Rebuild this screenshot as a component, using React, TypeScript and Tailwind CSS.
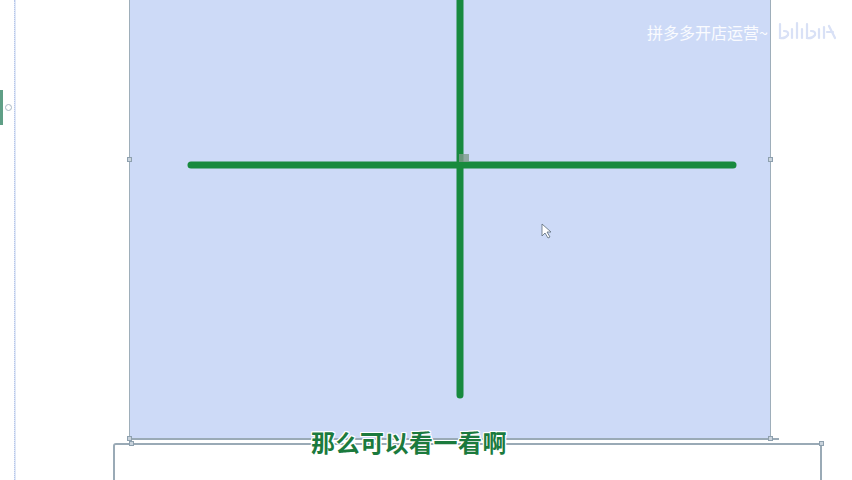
import React from "react";

const cjk = { fontFamily: '"Noto Sans CJK SC", "Noto Sans", sans-serif' };

function Handle({ className }: { className: string }) {
  return <span className={`absolute h-[5px] w-[5px] border border-[#8ea0ae] bg-[#c9d3dc] ${className}`} />;
}

function Cross() {
  return (
    <svg className="absolute left-0 top-0" width="642" height="438" viewBox="0 0 642 438">
      <line x1="330" y1="-10" x2="330" y2="395" stroke="#188a3e" strokeWidth="7" strokeLinecap="round" />
      <line x1="61" y1="165" x2="603" y2="165" stroke="#188a3e" strokeWidth="7" strokeLinecap="round" />
      <rect x="329" y="154" width="10" height="8" fill="#7f9b8c" opacity="0.8" />
      <path d="M412 224 L412 236 L415 233 L418 238 L420 237 L417 232 L421 232 Z" fill="#fff" stroke="#5b6b78" strokeWidth="0.8" />
    </svg>
  );
}

function BiliLogo() {
  return (
    <svg width="62" height="22" viewBox="0 0 62 22" className="opacity-70">
      <g fill="none" stroke="#c9d5f3" strokeWidth="2.2" strokeLinecap="round">
        <path d="M3 4 L3 18 Q8 19 11 15 Q12 11 7 11" />
        <path d="M15 9 L15 18" />
        <path d="M20 3 L20 18" />
        <path d="M25 9 L25 18" />
        <path d="M30 4 L30 18 Q35 19 38 15 Q39 11 34 11" />
        <path d="M42 9 L42 18" />
        <path d="M47 7 L47 18" />
        <path d="M50 12 L56 12" />
        <path d="M52 6 L58 18" />
      </g>
    </svg>
  );
}

export default function App() {
  return (
    <div className="relative flex h-[480px] w-[852px] overflow-hidden bg-white" style={cjk}>
      {/* left ruler strip */}
      <div className="relative w-[129px] shrink-0">
        <div className="ml-[14px] h-full w-[2px] border-l border-dotted border-[#b6c6e8] bg-[#dfe7f7]" />
        <div className="absolute left-0 top-[90px] h-[35px] w-[3px] bg-[#5f9f86]" />
        <div className="absolute left-[5px] top-[104px] h-[7px] w-[7px] rounded-full border border-[#a9b8c4] bg-white" />
      </div>

      <div className="flex flex-col">
        <div className="flex h-[438px] shrink-0">
          <div className="relative w-[642px] shrink-0 border-x border-[#9eaeba] bg-[#cddaf7]">
            <Cross />
            <Handle className="-left-[3px] top-[157px]" />
            <Handle className="-right-[3px] top-[157px]" />
            <div className="absolute right-[2px] top-[24px] text-[16px] leading-none text-white/90">
              拼多多开店运营~
            </div>
          </div>
          <div className="pl-[6px] pt-[20px]">
            <BiliLogo />
          </div>
        </div>

        <div className="relative h-[2px] w-[650px] shrink-0 bg-[#9aaab6]">
          <Handle className="-left-[2px] -top-[2px]" />
          <Handle className="left-[639px] -top-[2px]" />
        </div>
        <div className="relative -ml-[16px] mt-[3px] h-[40px] w-[709px] shrink-0 rounded-tl-[3px] border-l-2 border-r-2 border-t-2 border-[#9aaab6]">
          <Handle className="left-[14px] -top-[4px]" />
          <Handle className="-right-[4px] -top-[4px]" />
        </div>
      </div>

      <div
        className="absolute left-[311px] top-[426px] text-[24px] font-bold leading-[32px] tracking-[0.5px] text-[#1b7a3d]"
        style={{ ...cjk, textShadow: "1px 0 #fff, -1px 0 #fff, 0 1px #fff, 0 -1px #fff, 1px 1px #fff, -1px -1px #fff, 1px -1px #fff, -1px 1px #fff" }}
      >
        那么可以看一看啊
      </div>
    </div>
  );
}
